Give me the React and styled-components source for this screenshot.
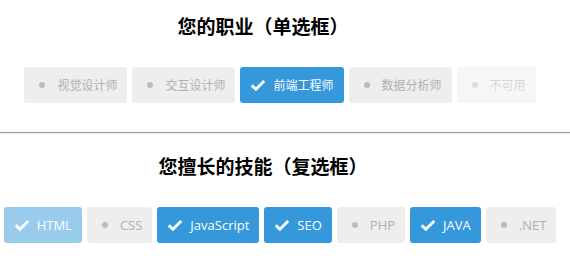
import React from "react";
import styled, { createGlobalStyle } from "styled-components";

const Global = createGlobalStyle`
  html, body { margin: 0; padding: 0; background: #fff; }
  body { font-family: "Open Sans", "Noto Sans CJK SC", sans-serif; }
`;

const Section = styled.section`
  display: flex;
  flex-direction: column;
  padding-top: ${(p) => p.$top}px;
  gap: 27px;
`;

const Title = styled.h3`
  margin: 0;
  padding-right: 44px;
  font-family: "Noto Sans CJK SC", sans-serif;
  font-weight: 700;
  font-size: 19px;
  line-height: 28px;
  color: #000;
  text-align: center;
`;

const Row = styled.div`
  display: flex;
  justify-content: center;
  gap: 5px;
  padding-right: 10px;
`;

const Option = styled.div`
  display: flex;
  align-items: center;
  height: 36px;
  padding: 0 10px;
  gap: 7px;
  border-radius: 3px;
  box-sizing: border-box;
  background: ${(p) => (p.$checked ? "#3498db" : "#eeeeee")};
  color: ${(p) => (p.$checked ? "#ffffff" : "#b0b0b0")};
  opacity: ${(p) => (p.$disabled ? 0.5 : 1)};
  cursor: ${(p) => (p.$disabled ? "not-allowed" : "pointer")};
`;

const IconBox = styled.span`
  width: 16px;
  height: 16px;
  display: flex;
  align-items: center;
  justify-content: center;
`;

const Dot = styled.span`
  width: 6px;
  height: 6px;
  border-radius: 50%;
  background: #bbbbbb;
`;

const Label = styled.span`
  font-family: ${(p) => (p.$latin ? '"Open Sans", sans-serif' : '"Noto Sans CJK SC", sans-serif')};
  font-size: ${(p) => (p.$latin ? 13 : 12)}px;
  line-height: 16px;
  white-space: nowrap;
`;

const Divider = styled.hr`
  margin: 29px 0 0;
  border: 0;
  border-top: 1px solid #9a9a9a;
  border-bottom: 1px solid #eeeeee;
  height: 0;
`;

const Check = () => (
  <svg width="16" height="16" viewBox="0 0 16 16">
    <path d="M1.8 8.4 L5.9 12.3 L14.2 3.9" fill="none" stroke="#fff" strokeWidth="2.9" strokeLinejoin="miter" />
  </svg>
);

const OptionItem = ({ label, checked, disabled, latin }) => (
  <Option $checked={checked} $disabled={disabled}>
    <IconBox>{checked ? <Check /> : <Dot />}</IconBox>
    <Label $latin={latin}>{label}</Label>
  </Option>
);

const jobs = [
  { label: "视觉设计师" },
  { label: "交互设计师" },
  { label: "前端工程师", checked: true },
  { label: "数据分析师" },
  { label: "不可用", disabled: true },
];

const skills = [
  { label: "HTML", checked: true, disabled: true },
  { label: "CSS" },
  { label: "JavaScript", checked: true },
  { label: "SEO", checked: true },
  { label: "PHP" },
  { label: "JAVA", checked: true },
  { label: ".NET" },
];

export default function App() {
  return (
    <>
      <Global />
      <Section $top={12}>
        <Title>您的职业（单选框）</Title>
        <Row>
          {jobs.map((j) => (
            <OptionItem key={j.label} {...j} />
          ))}
        </Row>
      </Section>
      <Divider />
      <Section $top={18}>
        <Title>您擅长的技能（复选框）</Title>
        <Row>
          {skills.map((s) => (
            <OptionItem key={s.label} latin {...s} />
          ))}
        </Row>
      </Section>
    </>
  );
}
